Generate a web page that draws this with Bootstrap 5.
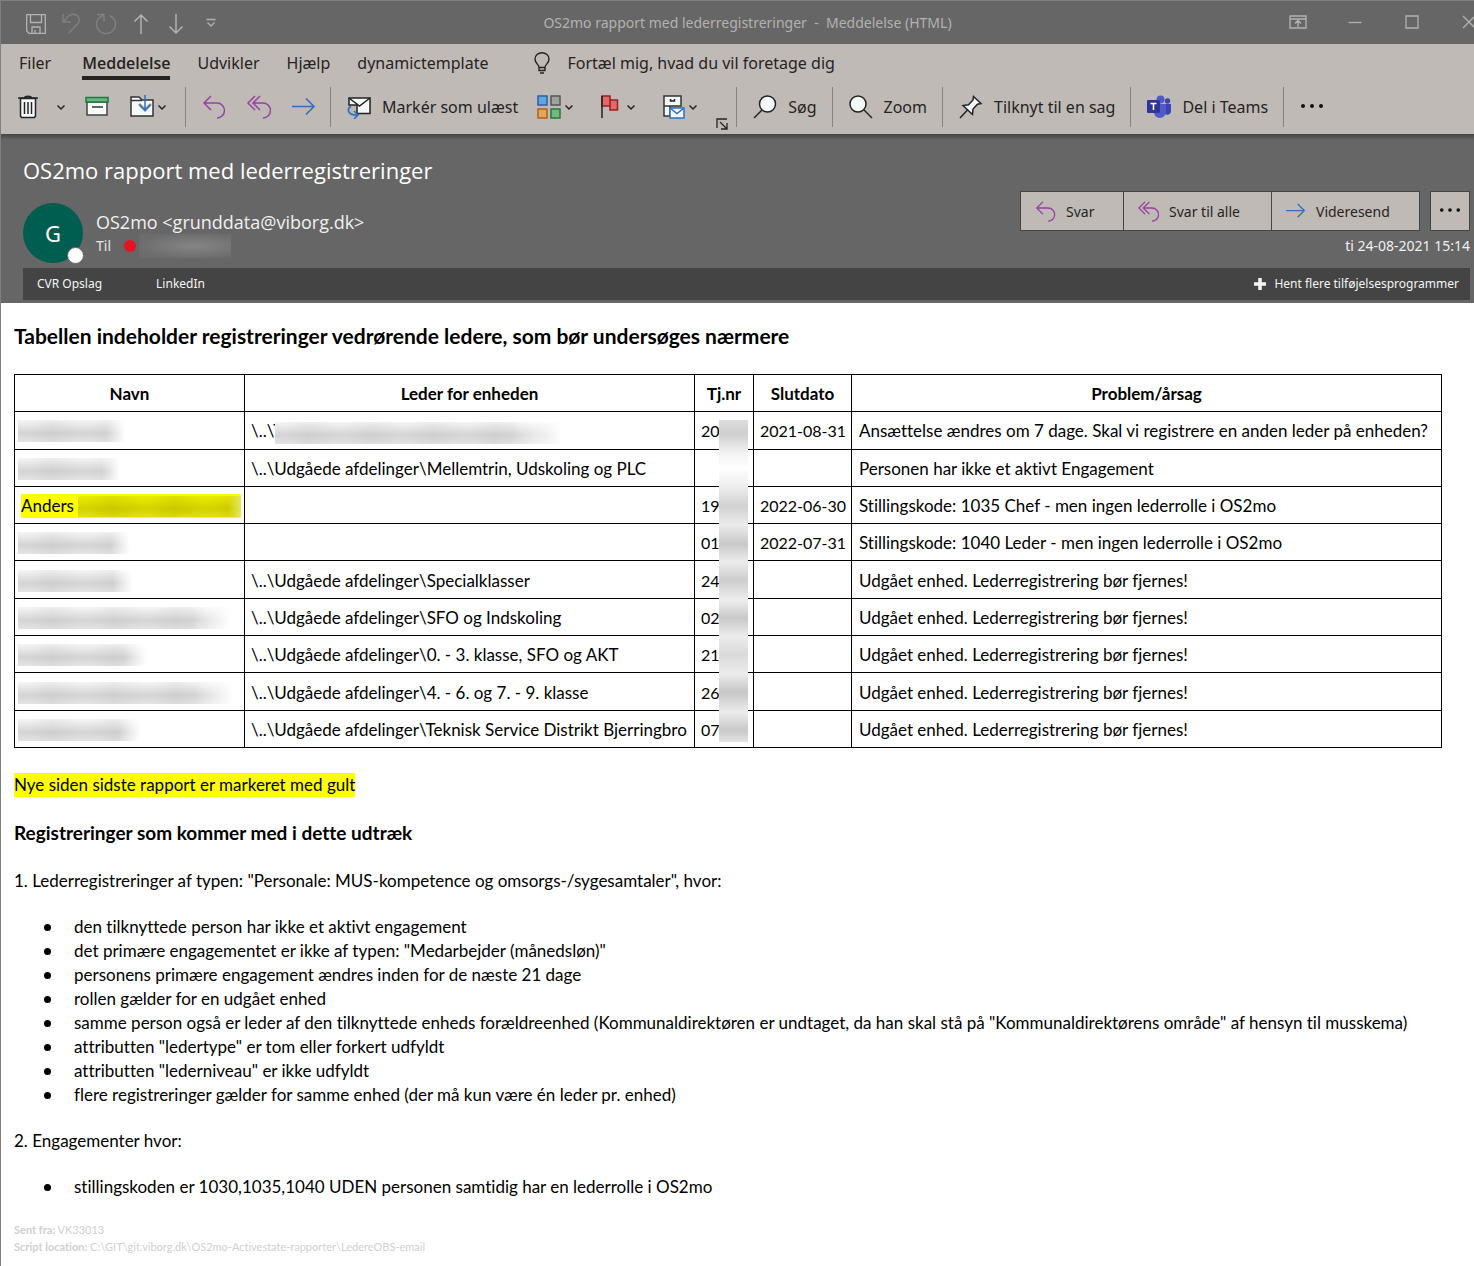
<!DOCTYPE html>
<html lang="da">
<head>
<meta charset="utf-8">
<meta name="viewport" content="width=device-width, initial-scale=1">
<title>OS2mo rapport med lederregistreringer - Meddelelse (HTML)</title>
<link rel="stylesheet" href="https://cdn.jsdelivr.net/npm/bootstrap@5.3.0/dist/css/bootstrap.min.css">
<style>
  :root { --ui: "Noto Sans", "Open Sans", sans-serif; --doc: Lato, "Open Sans", sans-serif; --dark: #666; --silver: #bfbab6; --ink: #252423; }
  body { font-family: var(--ui); color: #000; background: #fff; overflow-x: hidden; }
  svg { display: block; flex: none; fill: none; }
  button { border: 0; background: none; color: inherit; padding: 0; }
  .window { border-left: 1px solid #808080; }

  .titlebar { display: grid; grid-template-columns: 1fr auto 1fr; height: 44px; background: var(--dark); border-top: 1px solid #808080; color: #b4b2b0; overflow: hidden; }
  .titlebar h1 { font-size: 14px; line-height: 20px; margin: 0 0 0 20px; white-space: pre; }
  .quick { padding-left: 17px; }
  .quick button { width: 35px; display: flex; justify-content: center; }
  .winbtns { margin-right: -23px; }
  .winbtns button { width: 57px; display: flex; justify-content: center; }

  .ribbon { background: var(--silver); color: var(--ink); font-size: 16px; line-height: 24px; }
  .tabs { height: 36px; padding: 7px 18px 0; gap: 27px; }
  .tabs a { color: inherit; text-decoration: none; height: 29px; white-space: nowrap; }
  .tabs a.current { font-family: "Open Sans", sans-serif; font-weight: 600; border-bottom: 4px solid var(--ink); }
  .tellme { gap: 16px; margin-left: 18px; height: 24px; }
  .tools { height: 54px; }
  .tools > * { flex: none; }
  .rule { width: 1px; height: 40px; background: #85817e; }
  .labelled { display: flex; align-items: center; gap: 11px; padding: 0 15px 0 16px; white-space: nowrap; }
  .group { display: flex; align-items: center; }
  .filing { padding: 0 18px 0 15px; gap: 19px; }
  .answers { padding: 0 14px 0 16px; gap: 21px; }
  .launcher { align-self: flex-end; margin-bottom: 4px; }

  .mailhead { background: linear-gradient(#444, var(--dark) 6px); color: #fff; padding: 22px 4px 3px 22px; }
  .mailhead h2 { font-family: "Open Sans", sans-serif; font-size: 22px; line-height: 28px; margin: 0 0 19px; }
  .avatar-disc { position: relative; width: 60px; height: 60px; border-radius: 50%; background: #005e50; font-size: 22px; line-height: 60px; text-align: center; }
  .presence { position: absolute; right: -1px; bottom: -1px; width: 17px; height: 17px; border-radius: 50%; background: #fff; border: 1px solid var(--dark); }
  .sender { padding: 7px 0 0 13px; }
  .from { font-family: "Open Sans", sans-serif; font-size: 18px; line-height: 24px; color: #f0f0f0; }
  .to { font-size: 14px; line-height: 24px; color: #e6e6e6; }
  .dot { width: 12px; height: 12px; border-radius: 50%; background: #e81123; margin: 0 3px 0 13px; }
  .to-mask { width: 92px; height: 24px; background: radial-gradient(ellipse at 60% 50%, #858585, #6c6c6c 75%); }
  .replies { margin-top: -12px; }
  .replies button { height: 40px; display: flex; align-items: center; gap: 10px; padding-left: 14px; background: var(--silver); color: var(--ink); border: 1px solid #464543; font-size: 14px; }
  .replies button + button { margin-left: -1px; }
  .replies button.more { margin-left: 10px; padding: 0 8px; }
  .b-svar { width: 104px; } .b-alle { width: 149px; } .b-send { width: 149px; } .more { width: 40px; }
  .stamp { font-size: 14px; line-height: 20px; color: #f0f0f0; margin-top: 5px; }
  .addins { height: 32px; background: #444; font-size: 12px; padding: 0 11px 0 14px; margin-top: 5px; }
  .addins a { color: #f4f4f4; text-decoration: none; }
  .addins a + a { margin-left: 54px; }

  .letter { font-family: var(--doc); font-variant-ligatures: none; font-size: 17px; line-height: 24px; padding: 21px 32px 10px 13px; }
  .letter h3 { font-size: 21px; line-height: 24px; font-weight: 700; margin: 0 0 26px; }
  .letter h4 { font-size: 19px; line-height: 24px; font-weight: 700; margin: 0 0 24px; }
  .letter p { margin: 0 0 22px; }
  .letter ul { margin: 0 0 22px; padding-left: 60px; list-style: none; }
  .letter li::before { content: ""; float: left; width: 7px; height: 7px; margin: 9px 0 0 -30px; border-radius: 50%; background: #000; }
  .report { height: 374px; margin-bottom: 25px; }
  .report tr { height: 37px; }
  .report th, .report td { border: 1px solid #000; padding: 2px 3px 0 6px; white-space: nowrap; vertical-align: middle; }
  .report th { text-align: center; padding-right: 6px; }
  .report td:nth-child(3), .report td:nth-child(4) { font-size: 16px; }
  .report td:last-child { padding: 2px 0 0 7px; }
  .c-navn { width: 230px; } .c-enhed { width: 450px; } .c-nr { width: 59px; } .c-slut { width: 98px; }
  .marked { background: #ff0; }
  .masked { display: block; height: 22px; margin-left: -3px;
    background: linear-gradient(90deg, transparent 82%, #fff), repeating-linear-gradient(90deg, #0000 0 10px, #00000008 34px, #0000 62px), linear-gradient(#f5f5f5, #d4d4d4 60%, #e4e4e4); }
  .inline-mask { display: inline-block; vertical-align: middle; margin: 0 0 0 -8px; position: relative; }
  .yellow-mask { height: 21px; margin: 0;
    background: linear-gradient(90deg, transparent 92%, #e6e65a), repeating-linear-gradient(90deg, #0000 0 10px, #0000000c 34px, #0000 62px), linear-gradient(#ecec00, #d2d200 60%, #e2e200); }
  .nr-first { position: relative; }
  .nr-mask { position: absolute; z-index: 1; left: 24px; top: 8px; width: 29px; height: 322px;
    background: linear-gradient(#dedede, #cfcfcf 14px, #f4f4f4 34px, #fff 48px, #eee 66px, #d2d2d2 86px, #ebebeb 105px, #c9c9c9 124px, #ececec 142px, #cdcdcd 160px, #eee 180px, #c9c9c9 198px, #ececec 216px, #dadada 235px, #ececec 254px, #c6c6c6 272px, #ececec 292px, #c9c9c9 310px, #e2e2e2); }
  .origin { font-size: 11px; line-height: 17px; color: #d0d0d0; }
</style>
<script src="https://cdn.jsdelivr.net/npm/bootstrap@5.3.0/dist/js/bootstrap.bundle.min.js"></script>
</head>
<body>
<svg width="0" height="0" class="position-absolute" aria-hidden="true">
  <symbol id="reply" viewBox="0 0 24 24"><path d="M9 1 2 8l7 7M2 8h13a7.500 7.500 0 0 1 0 15" stroke="#9a3fa3" stroke-width="1.500"/></symbol>
  <symbol id="replyall" viewBox="0 0 24 24"><path d="M8 1 1 8l7 7M13 1 6 8l7 7M6 8h10a7.500 7.500 0 0 1 0 15" stroke="#9a3fa3" stroke-width="1.500"/></symbol>
  <symbol id="forward" viewBox="0 0 24 24"><path d="M0 11.500h22M14 3.500l8 8-8 8" stroke="#2e6fc4" stroke-width="1.600"/></symbol>
  <symbol id="chev" viewBox="0 0 10 10"><path d="M1.500 3.500 5 7l3.500-3.500" stroke="#252423" stroke-width="1.500"/></symbol>
  <symbol id="dots" viewBox="0 0 24 24"><path d="M3 11h.01M12 11h.01M21 11h.01" stroke="#111" stroke-width="4" stroke-linecap="round"/></symbol>
</svg>
<div class="window min-vh-100">

  <header class="titlebar">
    <div class="quick d-flex">
      <button type="button" aria-label="Gem"><svg width="20" height="44" viewBox="0 0 20 44" stroke="#b4b2b0" stroke-width="1.300"><path d="M.7 13.700h18.600v18.600H3L.7 30zM4.500 13.700v7.800h11v-7.800M6 32v-6h8v6M9 32v-3"/></svg></button>
      <button type="button" aria-label="Fortryd"><svg width="20" height="44" viewBox="0 0 20 44" stroke="#828180" stroke-width="1.400"><path d="M2 13v8h8M2 21l5-5.500c3-3 7-3 9.500-.5 2.500 2.800 2 6 0 8L7.500 32.500"/></svg></button>
      <button type="button" aria-label="Gentag"><svg width="22" height="44" viewBox="0 0 22 44" stroke="#828180" stroke-width="1.400"><path d="M2 13.500h7v7M9 14C4 16 1.500 19 1.500 23a9.500 9.500 0 1 0 13-8.700"/></svg></button>
      <button type="button" aria-label="Forrige"><svg width="16" height="44" viewBox="0 0 16 44" stroke="#b4b2b0" stroke-width="1.500"><path d="M8 33V14M1.500 20.500 8 14l6.500 6.500"/></svg></button>
      <button type="button" aria-label="Næste"><svg width="16" height="44" viewBox="0 0 16 44" stroke="#b4b2b0" stroke-width="1.500"><path d="M8 13v19M1.500 25.500 8 32l6.500-6.500"/></svg></button>
      <button type="button" aria-label="Tilpas"><svg width="10" height="44" viewBox="0 0 10 44" stroke="#b4b2b0" stroke-width="1.400"><path d="M.5 18.500h9M1.500 21.500 5 25l3.500-3.500"/></svg></button>
    </div>
    <h1 class="fw-normal align-self-center">OS2mo rapport med lederregistreringer  -  Meddelelse (HTML)</h1>
    <div class="winbtns d-flex justify-content-end">
      <button type="button" aria-label="Båndvisning"><svg width="18" height="43" viewBox="0 0 18 43" stroke="#b4b2b0" stroke-width="1.300"><path d="M1 15h16v12H1zM1 18h16M9 26v-6M6 22.500l3-3 3 3"/></svg></button>
      <button type="button" aria-label="Minimer"><svg width="14" height="43" viewBox="0 0 14 43" stroke="#b4b2b0" stroke-width="1.300"><path d="M.5 21.500h13"/></svg></button>
      <button type="button" aria-label="Maksimer"><svg width="14" height="43" viewBox="0 0 14 43" stroke="#b4b2b0" stroke-width="1.300"><path d="M1 15h12v12H1z"/></svg></button>
      <button type="button" aria-label="Luk"><svg width="14" height="43" viewBox="0 0 14 43" stroke="#b4b2b0" stroke-width="1.300"><path d="m1 15 12 12M13 15 1 27"/></svg></button>
    </div>
  </header>

  <div class="ribbon">
    <nav class="tabs d-flex">
      <a href="#" class="me-1">Filer</a>
      <a href="#" class="current">Meddelelse</a>
      <a href="#">Udvikler</a>
      <a href="#">Hjælp</a>
      <a href="#">dynamictemplate</a>
      <button type="button" class="tellme d-flex align-items-center text-nowrap">
        <svg width="18" height="22" viewBox="0 0 18 22" stroke="#252423" stroke-width="1.400"><path d="M6 15.500c0-3-4-4-4-8.500a7 6.300 0 0 1 14 0c0 4.500-4 5.500-4 8.500zM6 15.500v3h6v-3M7 21h4"/></svg>
        Fortæl mig, hvad du vil foretage dig
      </button>
    </nav>
    <div class="tools d-flex align-items-center">
      <div class="group filing">
        <button type="button" class="group" aria-label="Slet"><svg width="40" height="24" viewBox="0 0 40 24" stroke="#252423" stroke-width="1.500"><path fill="#f6f9f9" d="M4.500 3.500h15V21l-1 1.500h-13l-1-1.500z"/><path d="M2 3h20M8.500 3c0-2.500 7-2.500 7 0M8.500 7v12M12 7v12M15.500 7v12"/></svg><svg width="10" height="10"><use href="#chev"/></svg></button>
        <button type="button" aria-label="Arkivér"><svg width="24" height="24" viewBox="0 0 24 24" stroke-width="1.500"><path stroke="#444" fill="#f6f9f9" d="M2 7h20v13H2z"/><path stroke="#1e7a3e" fill="#6db482" d="M1 2.500h22V7H1z"/><path stroke="#333" d="M7 12h11"/></svg></button>
        <button type="button" class="group" aria-label="Flyt"><svg width="29" height="24" viewBox="-2 0 29 24" stroke-width="1.500"><path stroke="#333" fill="#f6f9f9" d="M1 21V2h8l3 3h11v16z"/><path stroke="#333" d="M1 5.500h11"/><path stroke="#aaa" stroke-width="3" d="m9 9 6 6 6-6"/><path stroke="#2e6fc4" d="M15 0v15M9.500 9.500l5.500 6 5.500-6"/></svg><svg width="10" height="10"><use href="#chev"/></svg></button>
      </div>
      <div class="rule"></div>
      <div class="group answers">
        <button type="button" aria-label="Svar"><svg width="24" height="24"><use href="#reply"/></svg></button>
        <button type="button" aria-label="Svar til alle"><svg width="24" height="24"><use href="#replyall"/></svg></button>
        <button type="button" aria-label="Videresend"><svg width="24" height="24"><use href="#forward"/></svg></button>
      </div>
      <div class="rule"></div>
      <button type="button" class="labelled"><svg width="24" height="24" viewBox="0 0 24 24"><path stroke="#222" stroke-width="1.500" fill="#f6f9f9" d="M2 3h21v15.500H10V10H2z"/><path stroke="#222" stroke-width="1.500" d="m2 3 10.500 8L23 3"/><path stroke="#2e6fc4" stroke-width="1.600" d="M4 11c-4 3-4 9 6 9M7 16l4 4-4 4"/></svg>Markér som ulæst</button>
      <button type="button" class="group ms-1" aria-label="Kategoriser"><svg width="27" height="24" viewBox="0 0 27 24" stroke-width="1.500"><path stroke="#2a5fb0" fill="#64a4dc" d="M1 1h9v9H1z"/><path stroke="#555" fill="#a0a09e" d="M14 1h9v9h-9z"/><path stroke="#b65f14" fill="#e0a660" d="M1 14h9v9H1z"/><path stroke="#237a3c" fill="#74b87f" d="M14 14h9v9h-9z"/></svg><svg width="10" height="10"><use href="#chev"/></svg></button>
      <button type="button" class="group ms-4" aria-label="Opfølgning"><svg width="28" height="24" viewBox="0 0 28 24" stroke-width="1.500"><path stroke="#a11c1c" fill="#de6a6a" d="M12 5h7.500v10H12zM4 1h8v10H4z"/><path stroke="#222" d="M4 1v22"/></svg><svg width="10" height="10"><use href="#chev"/></svg></button>
      <button type="button" class="group ms-4" aria-label="Regler"><svg width="28" height="24" viewBox="0 0 28 24" stroke-width="1.500"><path stroke="#333" fill="#f6f9f9" d="M4 1h17v10H4zM4 11v10h6V11z"/><path stroke="#222" d="M10.500 4v2h4V4"/><path stroke="#2e6fc4" fill="#f6f9f9" d="M10 13h14v10H10z"/><path stroke="#2e6fc4" d="m10 13 7 5.500 7-5.500"/></svg><svg width="10" height="10"><use href="#chev"/></svg></button>
      <button type="button" class="launcher ms-3" aria-label="Flere indstillinger"><svg width="14" height="12" viewBox="-2 0 14 12" stroke="#252423" stroke-width="1.300"><path d="M1 10V1h10M4 4l6.500 6.500M11 5v6H5"/></svg></button>
      <div class="rule ms-2"></div>
      <button type="button" class="labelled"><svg width="24" height="24" viewBox="0 0 24 24" stroke="#222" stroke-width="1.500"><circle cx="14.500" cy="9" r="8" fill="#f6f9f9"/><path d="m9 15-8 8"/></svg>Søg</button>
      <div class="rule"></div>
      <button type="button" class="labelled"><svg width="24" height="24" viewBox="0 0 24 24" stroke="#222" stroke-width="1.500"><circle cx="9" cy="9" r="8" fill="#f6f9f9"/><path d="m15 15 8 8"/></svg>Zoom</button>
      <div class="rule"></div>
      <button type="button" class="labelled"><svg width="24" height="24" viewBox="0 0 24 24" stroke="#222" stroke-width="1.500"><path fill="#f6f9f9" d="m14.500 1.500 7.500 7-3.500.8-4.500 4.700-.5 5.500L4 10.500l5.500-.8 4.500-4.700z"/><path d="m8.500 15-7.500 8"/></svg>Tilknyt til en sag</button>
      <div class="rule"></div>
      <button type="button" class="labelled"><svg width="24" height="24" viewBox="0 0 24 24"><circle cx="13.500" cy="4.500" r="4" fill="#5059c9"/><circle cx="20.500" cy="6" r="2.700" fill="#3c44b1"/><path fill="#3c44b1" d="M16 9h8v7c0 4-5 5-7 2z"/><path fill="#5059c9" d="M7 9h12v7c0 9-12 9-12 1z"/><rect y="5" width="13" height="13" rx="1" fill="#2f3595"/><path stroke="#fff" stroke-width="1.600" d="M3.500 8.500h6M6.500 8.500V15"/></svg>Del i Teams</button>
      <div class="rule"></div>
      <button type="button" class="ms-3" aria-label="Mere"><svg width="24" height="24"><use href="#dots"/></svg></button>
    </div>
  </div>

  <section class="mailhead">
    <h2 class="fw-normal">OS2mo rapport med lederregistreringer</h2>
    <div class="d-flex">
      <div class="avatar-disc">G<span class="presence"></span></div>
      <div class="sender flex-grow-1">
        <div class="from">OS2mo &lt;grunddata@viborg.dk&gt;</div>
        <div class="to d-flex align-items-center">Til<span class="dot"></span><span class="to-mask"></span></div>
      </div>
      <div class="text-end">
        <div class="replies d-flex">
          <button type="button" class="b-svar"><svg width="21" height="21"><use href="#reply"/></svg>Svar</button>
          <button type="button" class="b-alle"><svg width="21" height="21"><use href="#replyall"/></svg>Svar til alle</button>
          <button type="button" class="b-send"><svg width="20" height="20"><use href="#forward"/></svg>Videresend</button>
          <button type="button" class="more" aria-label="Mere"><svg width="22" height="22"><use href="#dots"/></svg></button>
        </div>
        <div class="stamp">ti 24-08-2021 15:14</div>
      </div>
    </div>
    <nav class="addins d-flex align-items-center">
      <a href="#">CVR Opslag</a><a href="#">LinkedIn</a>
      <a href="#" class="ms-auto d-flex align-items-center gap-2"><svg width="12" height="12" viewBox="0 0 12 12" stroke="#f4f4f4" stroke-width="3.500"><path d="M6 0v12M0 6h12"/></svg>Hent flere tilføjelsesprogrammer</a>
    </nav>
  </section>

  <main class="letter">
    <h3>Tabellen indeholder registreringer vedrørende ledere, som bør undersøges nærmere</h3>
    <table class="report w-100">
      <colgroup><col class="c-navn"><col class="c-enhed"><col class="c-nr"><col class="c-slut"><col></colgroup>
      <tbody>
        <tr><th scope="col">Navn</th><th scope="col">Leder for enheden</th><th scope="col">Tj.nr</th><th scope="col">Slutdato</th><th scope="col">Problem/årsag</th></tr>
        <tr><td><span class="masked" style="width:107px"></span></td><td>\..\T<span class="masked inline-mask" style="width:288px"></span></td><td class="nr-first">20<span class="nr-mask"></span></td><td>2021-08-31</td><td>Ansættelse ændres om 7 dage. Skal vi registrere en anden leder på enheden?</td></tr>
        <tr><td><span class="masked" style="width:102px"></span></td><td>\..\Udgåede afdelinger\Mellemtrin, Udskoling og PLC</td><td></td><td></td><td>Personen har ikke et aktivt Engagement</td></tr>
        <tr><td><div class="marked d-flex align-items-center">Anders&nbsp;<span class="masked yellow-mask flex-grow-1"></span></div></td><td></td><td>19</td><td>2022-06-30</td><td>Stillingskode: 1035 Chef - men ingen lederrolle i OS2mo</td></tr>
        <tr><td><span class="masked" style="width:112px"></span></td><td></td><td>01</td><td>2022-07-31</td><td>Stillingskode: 1040 Leder - men ingen lederrolle i OS2mo</td></tr>
        <tr><td><span class="masked" style="width:115px"></span></td><td>\..\Udgåede afdelinger\Specialklasser</td><td>24</td><td></td><td>Udgået enhed. Lederregistrering bør fjernes!</td></tr>
        <tr><td><span class="masked" style="width:212px"></span></td><td>\..\Udgåede afdelinger\SFO og Indskoling</td><td>02</td><td></td><td>Udgået enhed. Lederregistrering bør fjernes!</td></tr>
        <tr><td><span class="masked" style="width:129px"></span></td><td>\..\Udgåede afdelinger\0. - 3. klasse, SFO og AKT</td><td>21</td><td></td><td>Udgået enhed. Lederregistrering bør fjernes!</td></tr>
        <tr><td><span class="masked" style="width:215px"></span></td><td>\..\Udgåede afdelinger\4. - 6. og 7. - 9. klasse</td><td>26</td><td></td><td>Udgået enhed. Lederregistrering bør fjernes!</td></tr>
        <tr><td><span class="masked" style="width:123px"></span></td><td>\..\Udgåede afdelinger\Teknisk Service Distrikt Bjerringbro</td><td>07</td><td></td><td>Udgået enhed. Lederregistrering bør fjernes!</td></tr>
      </tbody>
    </table>
    <p class="mb-4"><span class="marked d-inline-block">Nye siden sidste rapport er markeret med gult</span></p>
    <h4>Registreringer som kommer med i dette udtræk</h4>
    <p>1. Lederregistreringer af typen: "Personale: MUS-kompetence og omsorgs-/sygesamtaler", hvor:</p>
    <ul>
      <li>den tilknyttede person har ikke et aktivt engagement</li>
      <li>det primære engagementet er ikke af typen: "Medarbejder (månedsløn)"</li>
      <li>personens primære engagement ændres inden for de næste 21 dage</li>
      <li>rollen gælder for en udgået enhed</li>
      <li>samme person også er leder af den tilknyttede enheds forældreenhed (Kommunaldirektøren er undtaget, da han skal stå på "Kommunaldirektørens område" af hensyn til musskema)</li>
      <li>attributten "ledertype" er tom eller forkert udfyldt</li>
      <li>attributten "lederniveau" er ikke udfyldt</li>
      <li>flere registreringer gælder for samme enhed (der må kun være én leder pr. enhed)</li>
    </ul>
    <p>2. Engagementer hvor:</p>
    <ul>
      <li>stillingskoden er 1030,1035,1040 UDEN personen samtidig har en lederrolle i OS2mo</li>
    </ul>
    <div class="origin"><b>Sent fra:</b> VK33013<br><b>Script location:</b> C:\GIT\git.viborg.dk\OS2mo-Activestate-rapporter\LedereOBS-email</div>
  </main>
</div>
</body>
</html>
